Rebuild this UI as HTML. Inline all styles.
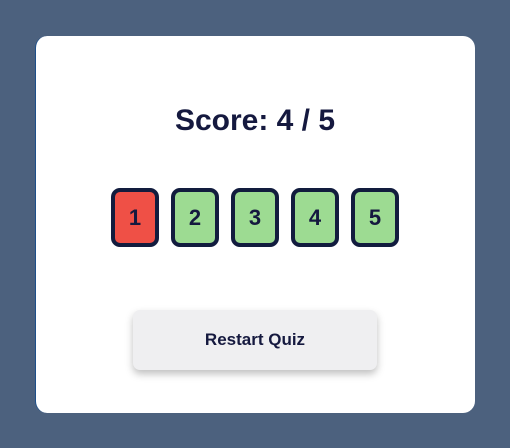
<!DOCTYPE html><html><head><style>
body{margin:0;width:510px;height:448px;background:#4c617e;font-family:"Liberation Sans",sans-serif;position:relative;overflow:hidden}
.card{position:absolute;left:35px;top:36px;width:440px;height:377px;background:#fff;border-radius:12px;border-left:1px solid #1d4f8a;box-sizing:border-box}
h1{position:absolute;left:0;right:0;top:104px;margin:0;text-align:center;font-size:30px;color:#15193f;font-weight:bold}
.t{position:absolute;top:188px;width:48px;height:59px;box-sizing:border-box;border:4px solid #121c3e;border-radius:9px;background:#9ddb92;color:#15193f;font-weight:bold;font-size:22px;text-align:center;line-height:52px}
.r{background:#ef5046}
.b{position:absolute;left:133px;top:310px;width:244px;height:60px;background:#efeff1;border-radius:7px;box-shadow:0 4px 8px rgba(0,0,0,.25);text-align:center;line-height:60px;font-weight:bold;font-size:17px;color:#15193f}
</style></head><body>
<div class="card"></div>
<h1>Score: 4 / 5</h1>
<div class="t r" style="left:111px">1</div>
<div class="t" style="left:171px">2</div>
<div class="t" style="left:231px">3</div>
<div class="t" style="left:291px">4</div>
<div class="t" style="left:351px">5</div>
<div class="b">Restart Quiz</div>
</body></html>
